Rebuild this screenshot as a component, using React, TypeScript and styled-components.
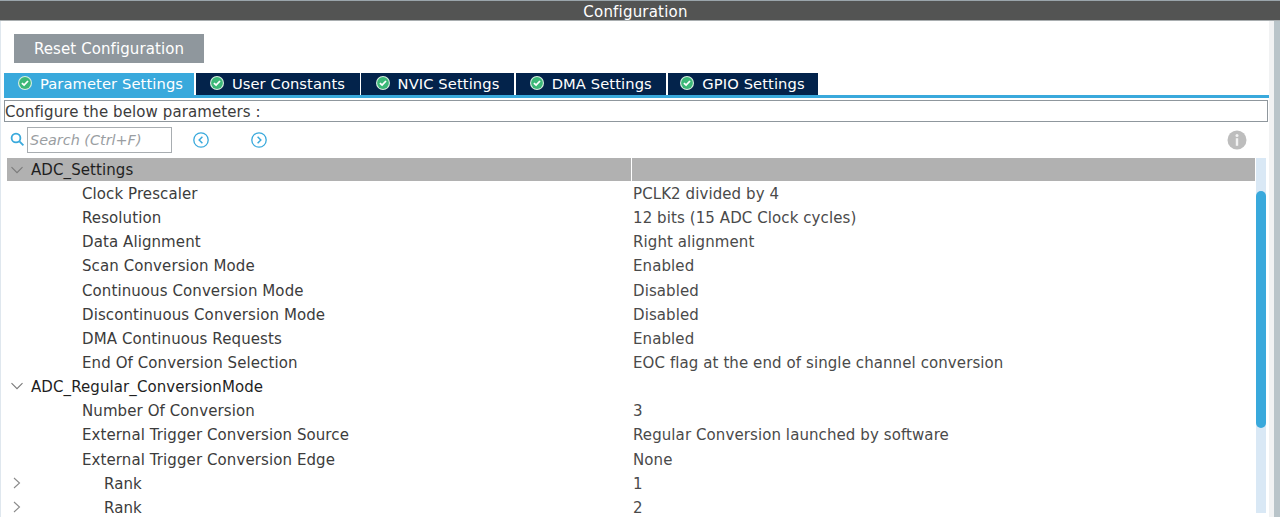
import React from "react";
import styled, { createGlobalStyle } from "styled-components";

const Global = createGlobalStyle`
  html, body { margin: 0; padding: 0; background: #fff; overflow: hidden; }
  #root { height: 517px; }
`;

const Page = styled.div`
  width: 1280px;
  height: 517px;
  overflow: hidden;
  display: flex;
  flex-direction: column;
  font-family: "DejaVu Sans", sans-serif;
  font-size: 15px;
  letter-spacing: 0.09px;
  color: #3c3c3c;
  background: #fff;
  border-top: 1px solid #9aa5ab;
  box-sizing: border-box;
`;

const Header = styled.div`
  flex: none;
  height: 14px;
  padding: 4px 9px 1px 0;
  background: #535453;
  border-bottom: 1px solid #a9aeb0;
  color: #fff;
  display: flex;
  align-items: center;
  justify-content: center;
  line-height: 14px;
  letter-spacing: 0.2px;
`;

const Shell = styled.div`
  flex: 1;
  min-height: 0;
  display: flex;
`;

const Main = styled.div`
  flex: none;
  width: 1269px;
  border-left: 1px solid #dfe7ee;
  display: flex;
  flex-direction: column;
  padding: 13px 1px 0 3px;
  box-sizing: border-box;
`;

const Gutter = styled.div`
  flex: none;
  width: 11px;
  display: flex;
`;

const GutterLight = styled.div`
  width: 5px;
  background: #f1f2f3;
`;

const GutterDark = styled.div`
  flex: 1;
  background: #b9c4c9;
`;

const ResetButton = styled.button`
  flex: none;
  align-self: flex-start;
  margin-left: 10px;
  width: 190px;
  height: 29px;
  border: none;
  background: #8f979d;
  color: #fff;
  font: inherit;
  letter-spacing: inherit;
  padding: 0;
`;

const TabBar = styled.div`
  flex: none;
  display: flex;
  margin-top: 10px;
  height: 22px;
  gap: 1.5px;
  font-size: 14.7px;
  letter-spacing: 0.1px;
`;

const Tab = styled.div<{ $active?: boolean; $w: number }>`
  width: ${(p) => p.$w}px;
  height: 22px;
  padding: 0 0 2px ${(p) => (p.$active ? 3 : 0)}px;
  background: ${(p) => (p.$active ? "#39a9dc" : "#03234b")};
  color: #fff;
  display: flex;
  align-items: center;
  justify-content: center;
  gap: 8px;
  white-space: nowrap;
  box-sizing: border-box;
`;

const TabRule = styled.div`
  flex: none;
  height: 3px;
  background: #39a9dc;
  margin-right: -2px;
`;

const Notice = styled.div`
  flex: none;
  height: 22px;
  margin-top: 2px;
  border: 1px solid #8f979d;
  box-sizing: border-box;
  line-height: 22px;
  white-space: nowrap;
`;

const SearchRow = styled.div`
  flex: none;
  height: 29px;
  margin-top: 3px;
  display: flex;
  align-items: center;
  padding-left: 6px;
`;

const SearchInput = styled.div`
  width: 145px;
  height: 26px;
  border: 1px solid #a8adb1;
  box-sizing: border-box;
  margin-left: 2px;
  line-height: 24px;
  padding-left: 2px;
  font-size: 14.4px;
  letter-spacing: 0;
  font-style: italic;
  color: #9a9ea2;
  white-space: nowrap;
`;

const NavButton = styled.div<{ $left: number }>`
  display: flex;
  margin-left: ${(p) => p.$left}px;
`;

const InfoBadge = styled.div`
  margin-left: auto;
  margin-right: 21px;
  display: flex;
`;

const TableWrap = styled.div`
  flex: 1;
  min-height: 0;
  display: flex;
  margin-top: 4px;
  margin-left: 3px;
`;

const Table = styled.div`
  flex: none;
  width: 1248px;
  display: flex;
  flex-direction: column;
`;

const Row = styled.div<{ $h?: number }>`
  flex: none;
  height: ${(p) => p.$h ?? 24.15}px;
  display: grid;
  grid-template-columns: 624px 1fr;
  grid-template-rows: ${(p) => p.$h ?? 24.15}px;
  column-gap: 1px;
  line-height: ${(p) => (p.$h ?? 24.15) + 2}px;
  white-space: nowrap;
`;

const NameCell = styled.div<{ $head?: boolean; $group?: boolean; $indent: number }>`
  position: relative;
  padding-left: ${(p) => p.$indent}px;
  background: ${(p) => (p.$head ? "#b1b1b1" : "transparent")};
  color: ${(p) => (p.$group ? "#1f1f1f" : "#3c3c3c")};
`;

const ValueCell = styled.div<{ $head?: boolean }>`
  padding-left: 1px;
  background: ${(p) => (p.$head ? "#b1b1b1" : "transparent")};
  color: #4a4a4a;
`;

const Chevron = styled.svg`
  position: absolute;
  left: 3px;
  top: 50%;
  transform: translateY(-50%);
`;

const ScrollTrack = styled.div`
  flex: none;
  width: 10px;
  height: 355px;
  margin-left: 1px;
  background: #d9e8f5;
`;

const ScrollThumb = styled.div`
  width: 10px;
  height: 237px;
  margin-top: 33px;
  border-radius: 5px;
  background: #39a9dc;
`;

const TabCheck = () => (
  <svg width="14" height="14" viewBox="0 0 14 14">
    <circle cx="7" cy="7" r="7" fill="#d8efe0" />
    <circle cx="7" cy="7" r="5.9" fill="#3cb878" />
    <path d="M3.9 7.1 L6.1 9.1 L10 5" fill="none" stroke="#fff" strokeWidth="1.8" />
  </svg>
);

const Nav = ({ dir }: { dir: "l" | "r" }) => (
  <svg width="16" height="16" viewBox="0 0 16 16" fill="none" stroke="#39a9dc">
    <circle cx="8" cy="8" r="7.2" strokeWidth="1.3" />
    <path d={dir === "l" ? "M9.4 4.8 L6.2 8 L9.4 11.2" : "M6.6 4.8 L9.8 8 L6.6 11.2"} strokeWidth="1.5" />
  </svg>
);

const tabs = [
  { label: "Parameter Settings", w: 190, active: true },
  { label: "User Constants", w: 164 },
  { label: "NVIC Settings", w: 153 },
  { label: "DMA Settings", w: 150.5 },
  { label: "GPIO Settings", w: 150 },
];

type Item = { name: string; value?: string; kind?: "group" | "rank" };
const items: Item[] = [
  { name: "Clock Prescaler", value: "PCLK2 divided by 4" },
  { name: "Resolution", value: "12 bits (15 ADC Clock cycles)" },
  { name: "Data Alignment", value: "Right alignment" },
  { name: "Scan Conversion Mode", value: "Enabled" },
  { name: "Continuous Conversion Mode", value: "Disabled" },
  { name: "Discontinuous Conversion Mode", value: "Disabled" },
  { name: "DMA Continuous Requests", value: "Enabled" },
  { name: "End Of Conversion Selection", value: "EOC flag at the end of single channel conversion" },
  { name: "ADC_Regular_ConversionMode", kind: "group" },
  { name: "Number Of Conversion", value: "3" },
  { name: "External Trigger Conversion Source", value: "Regular Conversion launched by software" },
  { name: "External Trigger Conversion Edge", value: "None" },
  { name: "Rank", value: "1", kind: "rank" },
  { name: "Rank", value: "2", kind: "rank" },
];

const Down = () => (
  <Chevron width="14" height="14" viewBox="0 0 14 14" fill="none" stroke="#7a7a7a" strokeWidth="1.1">
    <path d="M1.5 4.2 L7 9.7 L12.5 4.2" />
  </Chevron>
);
const Right = () => (
  <Chevron width="14" height="14" viewBox="0 0 14 14" fill="none" stroke="#8a8a8a" strokeWidth="1.1">
    <path d="M4 2 L9.5 7 L4 12" />
  </Chevron>
);

export default function App() {
  return (
    <Page>
      <Global />
      <Header>Configuration</Header>
      <Shell>
        <Main>
          <ResetButton>Reset Configuration</ResetButton>
          <TabBar>
            {tabs.map((t) => (
              <Tab key={t.label} $active={t.active} $w={t.w}>
                <TabCheck />
                {t.label}
              </Tab>
            ))}
          </TabBar>
          <TabRule />
          <Notice>Configure the below parameters :</Notice>
          <SearchRow>
            <svg width="15" height="15" viewBox="0 0 15 15" fill="none" stroke="#39a9dc" strokeWidth="1.8">
              <circle cx="6" cy="6" r="4.4" />
              <path d="M9.4 9.4 L13.4 13.4" />
            </svg>
            <SearchInput>Search (Ctrl+F)</SearchInput>
            <NavButton $left={21}>
              <Nav dir="l" />
            </NavButton>
            <NavButton $left={42}>
              <Nav dir="r" />
            </NavButton>
            <InfoBadge>
              <svg width="20" height="20" viewBox="0 0 20 20">
                <circle cx="10" cy="10" r="9.5" fill="#bdbdbd" />
                <circle cx="10" cy="5.6" r="1.5" fill="#f2f2f2" />
                <rect x="8.8" y="8.2" width="2.4" height="7.6" fill="#f2f2f2" />
              </svg>
            </InfoBadge>
          </SearchRow>
          <TableWrap>
            <Table>
              <Row $h={23}>
                <NameCell $head $group $indent={24}>
                  <Down />
                  ADC_Settings
                </NameCell>
                <ValueCell $head />
              </Row>
              {items.map((it, i) => (
                <Row key={i}>
                  <NameCell
                    $group={it.kind === "group"}
                    $indent={it.kind === "group" ? 24 : it.kind === "rank" ? 97 : 75}
                  >
                    {it.kind === "group" && <Down />}
                    {it.kind === "rank" && <Right />}
                    {it.name}
                  </NameCell>
                  <ValueCell>{it.value}</ValueCell>
                </Row>
              ))}
            </Table>
            <ScrollTrack>
              <ScrollThumb />
            </ScrollTrack>
          </TableWrap>
        </Main>
        <Gutter>
          <GutterLight />
          <GutterDark />
        </Gutter>
      </Shell>
    </Page>
  );
}
